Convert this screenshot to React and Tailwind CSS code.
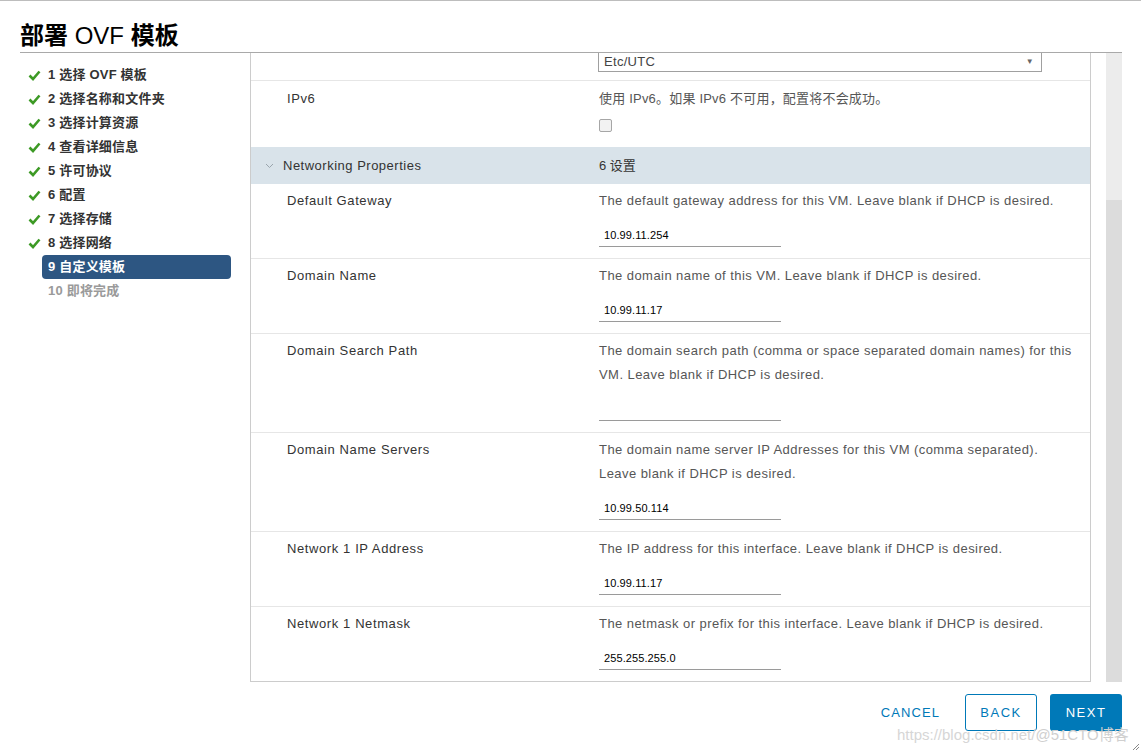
import React from 'react';

const font = { fontFamily: '"Liberation Sans", "Noto Sans CJK SC", sans-serif' };

const steps = [
  { n: '1', t: '选择 OVF 模板', done: true },
  { n: '2', t: '选择名称和文件夹', done: true },
  { n: '3', t: '选择计算资源', done: true },
  { n: '4', t: '查看详细信息', done: true },
  { n: '5', t: '许可协议', done: true },
  { n: '6', t: '配置', done: true },
  { n: '7', t: '选择存储', done: true },
  { n: '8', t: '选择网络', done: true },
  { n: '9', t: '自定义模板', active: true },
  { n: '10', t: '即将完成', pending: true },
];

const fields = [
  { label: 'Default Gateway', desc: ['The default gateway address for this VM. Leave blank if DHCP is desired.'], value: '10.99.11.254' },
  { label: 'Domain Name', desc: ['The domain name of this VM. Leave blank if DHCP is desired.'], value: '10.99.11.17' },
  { label: 'Domain Search Path', desc: ['The domain search path (comma or space separated domain names) for this', 'VM. Leave blank if DHCP is desired.'], value: '' },
  { label: 'Domain Name Servers', desc: ['The domain name server IP Addresses for this VM (comma separated).', 'Leave blank if DHCP is desired.'], value: '10.99.50.114' },
  { label: 'Network 1 IP Address', desc: ['The IP address for this interface. Leave blank if DHCP is desired.'], value: '10.99.11.17' },
  { label: 'Network 1 Netmask', desc: ['The netmask or prefix for this interface. Leave blank if DHCP is desired.'], value: '255.255.255.0', last: true },
];

const Check = () => (
  <svg width="13" height="11" viewBox="0 0 13 11">
    <polyline points="1.5,5.5 5,9 11.5,1.5" fill="none" stroke="#3d9a25" strokeWidth="2.6" />
  </svg>
);

const StepItem = ({ step }) => (
  <div className="flex h-[24px] items-center">
    <div className="w-[22px] h-full flex items-center pl-[8px]">
      {step.done && <Check />}
    </div>
    <div
      className={`w-[189px] h-[24px] px-[6px] flex items-center rounded-[4px] text-[13px] font-bold tracking-[0.2px] ${
        step.active ? 'bg-[#2d5682] text-white' : step.pending ? 'text-[#9a9a9a]' : 'text-[#333]'
      }`}
    >
      {step.n} {step.t}
    </div>
  </div>
);

const FieldRow = ({ f }) => (
  <div className={`flex pt-[5px] pb-[11px] ${f.last ? '' : 'border-b border-[#e6e6e6]'}`}>
    <div className="w-[348px] pl-[36px] text-[13px] leading-[24px] text-[#333] tracking-[0.6px]">{f.label}</div>
    <div className="flex-1 pr-[10px]">
      {f.desc.map((d, i) => (
        <div key={i} className="text-[13px] leading-[24px] text-[#565656] tracking-[0.44px] whitespace-nowrap">{d}</div>
      ))}
      <div className="mt-[12px] w-[182px] h-[22px] border-b border-[#9a9a9a] pl-[5px] flex items-center text-[11px] text-black tracking-[0.1px]">
        {f.value}
      </div>
    </div>
  </div>
);

export default function App() {
  return (
    <div className="w-[1141px] h-[752px] bg-white border-t border-[#bdbdbd] relative overflow-hidden" style={font}>
      <div className="h-[51px] pl-[20px] pt-[19px] text-[24px] leading-[32px] text-black">
        <span className="font-bold">部署</span> <span className="font-light">OVF</span> <span className="font-bold">模板</span>
      </div>

      <div className="ml-[20px] mr-[19px] border-t border-[#a9a9a9] flex h-[630px]">
        <nav className="w-[230px] pt-[10px]">
          {steps.map((s) => (
            <StepItem key={s.n} step={s} />
          ))}
        </nav>

        <section className="w-[841px] h-[629px] border-l border-r border-b border-[#cccccc] overflow-hidden">
          <div className="h-[28px] border-b border-[#e6e6e6] flex">
            <div className="w-[347px]" />
            <div className="w-[444px] h-[19px] border-x border-b border-[#a0a0a0] flex items-center justify-between px-[5px] text-[13px] text-[#444] tracking-[0.3px]">
              <span>Etc/UTC</span>
              <span className="text-[8px] text-[#666] pr-[2px]">▼</span>
            </div>
          </div>

          <div className="flex pt-[6px] h-[66px]">
            <div className="w-[348px] pl-[36px] text-[13px] leading-[24px] text-[#333] tracking-[0.6px]">IPv6</div>
            <div className="flex-1">
              <div className="text-[13px] leading-[24px] text-[#565656] tracking-[0.2px]">使用 IPv6。如果 IPv6 不可用，配置将不会成功。</div>
              <div className="mt-[8px] w-[13px] h-[13px] rounded-[2px] border border-[#a6a6a6] bg-[#f2f2f2]" />
            </div>
          </div>

          <div className="h-[37px] bg-[#d9e3ea] flex items-center">
            <div className="w-[348px] flex items-center pl-[14px] text-[13px] text-[#333] tracking-[0.5px]">
              <svg width="9" height="6" viewBox="0 0 9 6" className="mr-[9px]">
                <polyline points="1,1 4.5,4.5 8,1" fill="none" stroke="#9aa5ad" strokeWidth="1" />
              </svg>
              Networking Properties
            </div>
            <div className="text-[13px] text-[#333]">6 设置</div>
          </div>

          {fields.map((f) => (
            <FieldRow key={f.label} f={f} />
          ))}
        </section>

        <div className="w-[15px]" />
        <div className="w-[16px] flex flex-col">
          <div className="h-[147px] bg-[#ececec]" />
          <div className="flex-1 bg-[#dcdcdc]" />
        </div>
      </div>

      <div className="mt-[12px] mr-[19px] flex justify-end items-center text-[13px] tracking-[1.5px]">
        <button className="h-[37px] px-[8px] tracking-[1.1px] text-[#0079b8]">CANCEL</button>
        <button className="ml-[17px] w-[72px] h-[37px] rounded-[3px] border border-[#0079b8] text-[#0079b8] bg-white">BACK</button>
        <button className="ml-[13px] w-[72px] h-[37px] rounded-[3px] bg-[#0079b8] text-white">NEXT</button>
      </div>

      <div className="absolute left-[897px] top-[723px] text-[15px] text-[#d6d6d6] pointer-events-none whitespace-nowrap">
        https://blog.csdn.net/<span className="text-[#cfcfcf]">@51CTO博客</span>
      </div>

      <svg className="absolute right-[1px] bottom-[1px]" width="8" height="8" viewBox="0 0 8 8">
        <line x1="7" y1="1" x2="1" y2="7" stroke="#888" />
        <line x1="7" y1="4" x2="4" y2="7" stroke="#888" />
      </svg>
    </div>
  );
}
